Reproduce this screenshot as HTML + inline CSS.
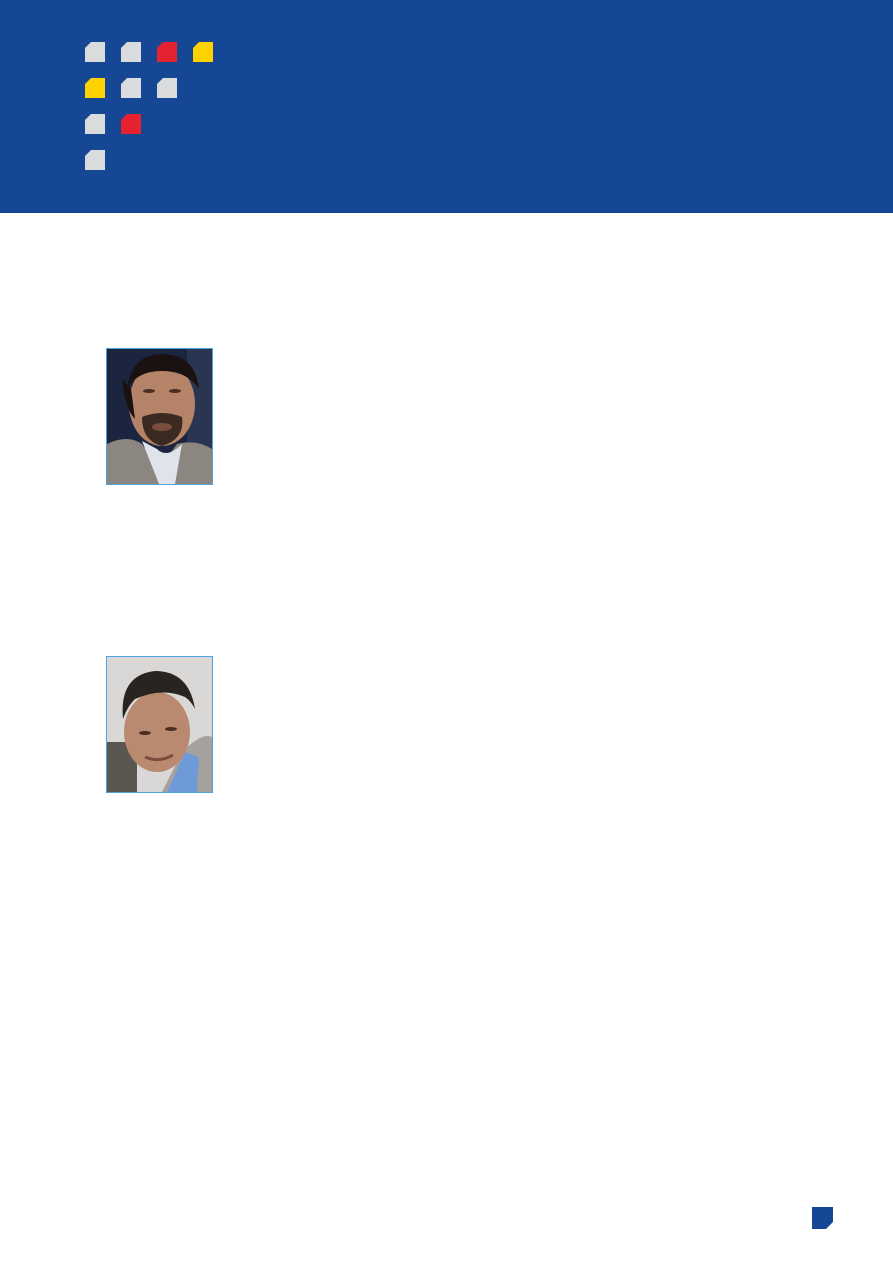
<!DOCTYPE html>
<html><head><meta charset="utf-8"><style>
html,body{margin:0;padding:0;background:#fff;}
body{width:893px;height:1263px;position:relative;overflow:hidden;font-family:"Liberation Sans",sans-serif;}
.hdr{position:absolute;left:0;top:0;width:893px;height:213px;background:#164794;}
.sq{position:absolute;width:20px;height:20px;clip-path:polygon(6px 0,20px 0,20px 20px,0 20px,0 6px);}
.g{background:#dadbdc}.r{background:#e5222f}.y{background:#fdd200}
.ph{position:absolute;left:106px;width:105px;height:135px;border:1px solid #4da3e0;overflow:hidden;}
.ph svg{display:block}
</style></head><body>
<div class="hdr">
<div class="sq g" style="left:85px;top:42px"></div>
<div class="sq g" style="left:121px;top:42px"></div>
<div class="sq r" style="left:157px;top:42px"></div>
<div class="sq y" style="left:193px;top:42px"></div>
<div class="sq y" style="left:85px;top:78px"></div>
<div class="sq g" style="left:121px;top:78px"></div>
<div class="sq g" style="left:157px;top:78px"></div>
<div class="sq g" style="left:85px;top:114px"></div>
<div class="sq r" style="left:121px;top:114px"></div>
<div class="sq g" style="left:85px;top:150px"></div>
</div>

<div class="ph" style="top:348px">
<svg width="105" height="135" viewBox="0 0 105 135">
<rect width="105" height="135" fill="#1c2540"/>
<rect x="80" y="0" width="25" height="100" fill="#2a3552"/>
<path d="M0 95 Q20 85 35 95 L52 120 L70 95 Q90 90 105 100 L105 135 L0 135Z" fill="#8b8680"/>
<path d="M35 92 L52 135 L68 135 L75 95 Q60 110 50 100Z" fill="#dfe3ea"/>
<ellipse cx="55" cy="55" rx="33" ry="42" fill="#b58468"/>
<path d="M20 40 Q25 5 55 5 Q88 5 92 40 Q80 22 55 22 Q30 22 20 40Z" fill="#1a1210"/>
<path d="M15 30 Q18 60 28 70 L24 40Z" fill="#1a1210"/>
<path d="M35 68 Q55 60 75 68 Q78 90 55 97 Q35 92 35 68Z" fill="#3a2a22"/>
<ellipse cx="55" cy="78" rx="10" ry="4" fill="#7b4c3c"/>
<ellipse cx="42" cy="42" rx="6" ry="2" fill="#4a2e22"/>
<ellipse cx="68" cy="42" rx="6" ry="2" fill="#4a2e22"/>
</svg>
</div>

<div class="ph" style="top:656px">
<svg width="105" height="135" viewBox="0 0 105 135">
<rect width="105" height="135" fill="#d9d8d6"/>
<rect x="0" y="85" width="30" height="50" fill="#5a5650"/>
<path d="M55 135 L75 95 Q95 75 105 80 L105 135Z" fill="#a5a29d"/>
<path d="M60 135 L78 95 L92 100 L90 135Z" fill="#6f9ad8"/>
<ellipse cx="50" cy="75" rx="33" ry="40" fill="#b98a70"/>
<path d="M16 62 Q12 18 48 14 Q82 14 88 52 Q84 44 78 40 Q55 30 28 42 Q20 50 16 62Z" fill="#2a2420"/>
<ellipse cx="38" cy="76" rx="6" ry="2" fill="#4a2e22"/>
<ellipse cx="64" cy="72" rx="6" ry="2" fill="#4a2e22"/>
<path d="M38 100 Q52 106 66 98" stroke="#7b4c3c" stroke-width="3" fill="none"/>
</svg>
</div>

<div style="position:absolute;left:812px;top:1207px;width:21px;height:22px;background:#164794;clip-path:polygon(0 0,21px 0,21px 15px,14px 22px,0 22px)"></div>
</body></html>
